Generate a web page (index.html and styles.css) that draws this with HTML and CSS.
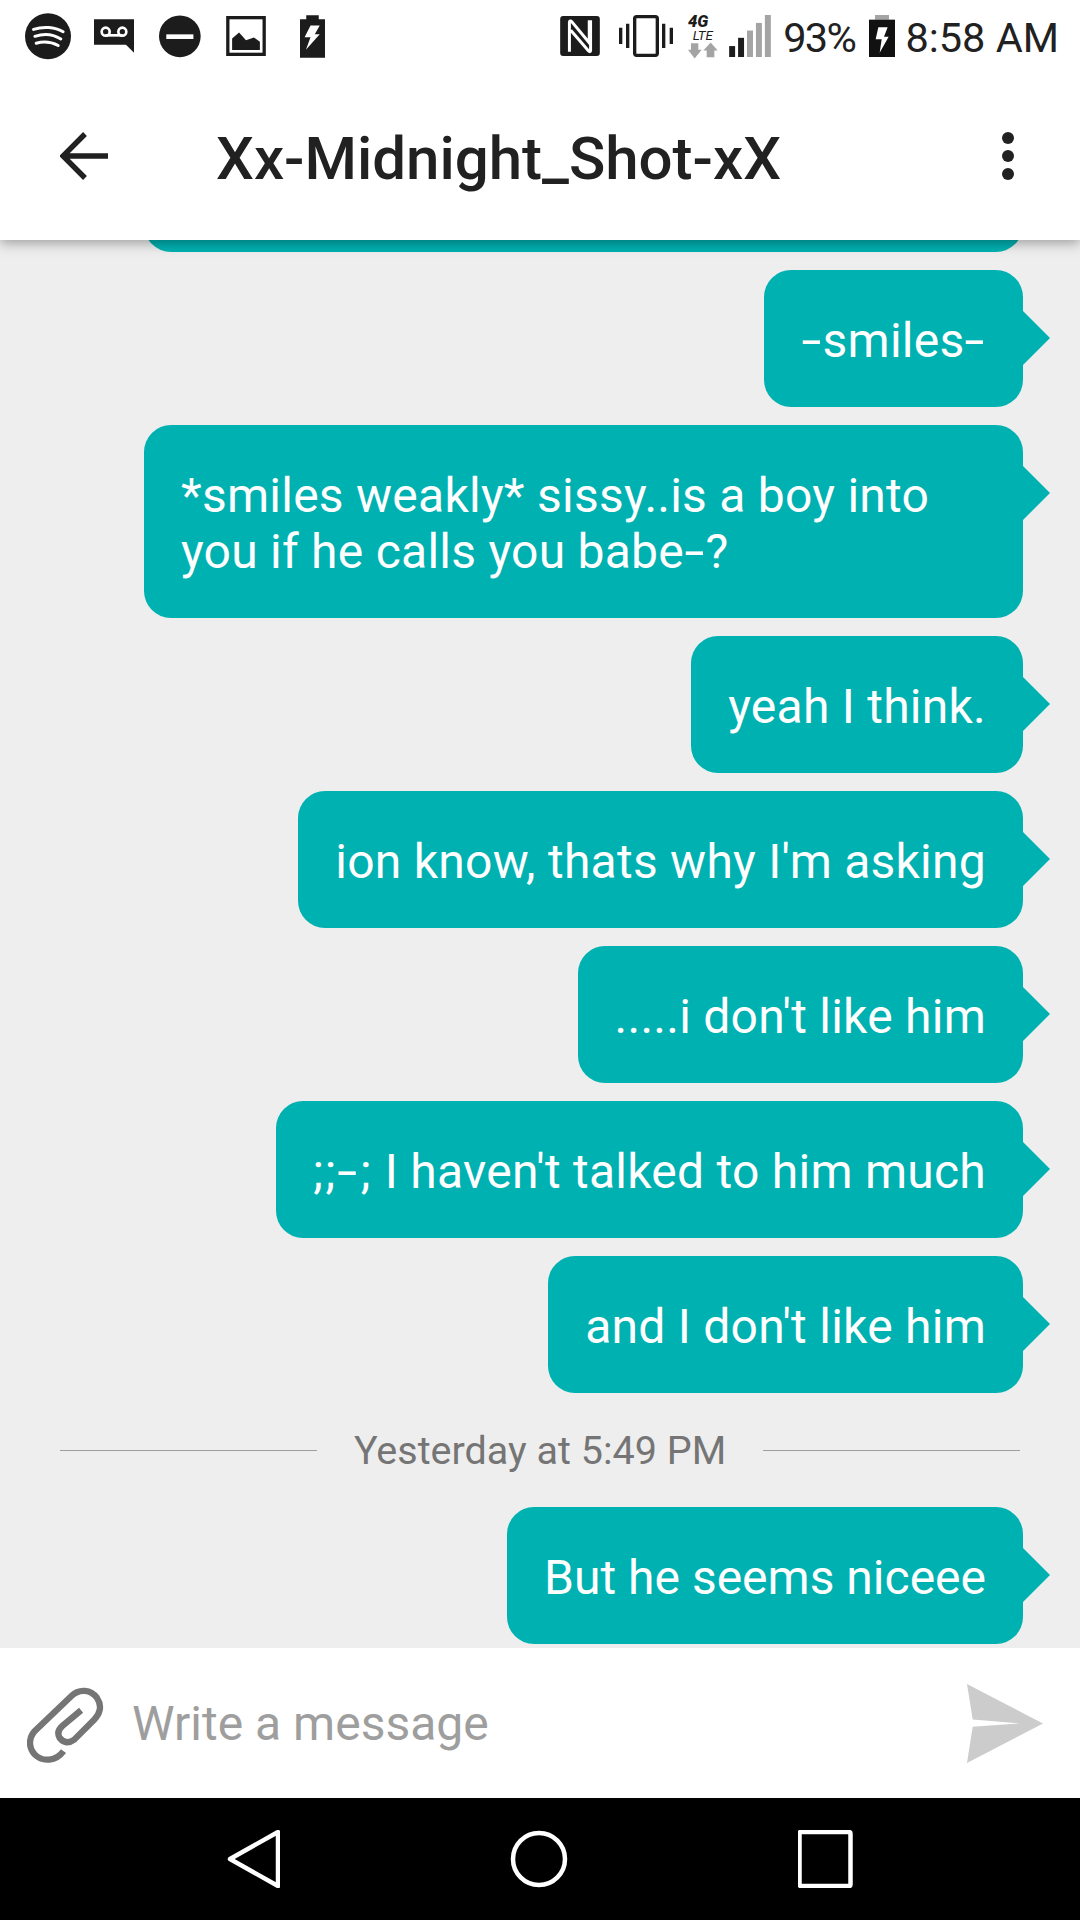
FILE: index.html
```html
<!DOCTYPE html>
<html lang="en">
<head>
    <meta charset="UTF-8">
    <meta name="viewport" content="width=device-width, initial-scale=1.0">
    <title>Chat</title>
    <link rel="stylesheet" href="styles.css">
</head>
<body>
    <div class="app">
        <div class="top">
            <!-- Status bar -->
            <div class="status-bar">
                <div class="status-left">
                    <svg class="ic-spotify" width="46" height="47" viewBox="75 38 140 141">
                        <circle cx="145" cy="108" r="70" fill="#1c1c1c"/>
                        <path d="M101 87C130 77 165 79 191 94M105 108C132 99 160 101 184 116M109 129C130 123 154 124 176 136" fill="none" stroke="#fff" stroke-width="9" stroke-linecap="round"/>
                    </svg>
                    <svg class="ic-voicemail" width="40" height="34" viewBox="282 56 120 102">
                        <path d="M282 57H402V157L378 133H282Z" fill="#1c1c1c"/>
                        <circle cx="317" cy="94" r="12" fill="none" stroke="#fff" stroke-width="8"/>
                        <circle cx="367" cy="94" r="12" fill="none" stroke="#fff" stroke-width="8"/>
                        <path d="M317 105H367" stroke="#fff" stroke-width="8"/>
                    </svg>
                    <svg class="ic-dnd" width="42" height="43" viewBox="477 44 127 127">
                        <circle cx="540" cy="107" r="63" fill="#1c1c1c"/>
                        <rect x="499" y="101" width="82" height="14" fill="#fff"/>
                    </svg>
                    <svg class="ic-image" width="40" height="40" viewBox="678 47 120 121">
                        <rect x="683" y="52" width="110" height="111" fill="none" stroke="#1c1c1c" stroke-width="10"/>
                        <path d="M696 150V115L717 97L738 120L762 112L780 125V150Z" fill="#1c1c1c"/>
                    </svg>
                    <svg class="ic-battery" width="25" height="43" viewBox="900 45 76 129">
                        <path d="M919 45H957V57H976V174H900V57H919Z" fill="#1c1c1c"/>
                        <path d="M932 76H960L945 103H960L918 150L932 112H914Z" fill="#fff"/>
                    </svg>
                </div>
                <div class="status-right">
                    <svg class="ic-nfc" width="40" height="40" viewBox="60 47 120 121">
                        <rect x="60" y="47" width="120" height="121" rx="9" fill="#1c1c1c"/>
                        <path d="M88 155V66C88 62 92 60 95 64L148 128V60M152 60V152C152 155 149 156 146 153L92 90" fill="none" stroke="#fff" stroke-width="9"/>
                    </svg>
                    <svg class="ic-vibrate" width="54" height="42" viewBox="237 45 162 126">
                        <rect x="284" y="50" width="68" height="116" rx="6" fill="none" stroke="#1c1c1c" stroke-width="10"/>
                        <path d="M242 83V132M263 71V144M371 71V144M394 83V132" stroke="#1c1c1c" stroke-width="10"/>
                    </svg>
                    <svg class="ic-lte" width="30" height="46" viewBox="444 36 90 137">
                        <text x="444" y="79" class="lte-4g">4G</text>
                        <text x="458" y="116" class="lte-text">LTE</text>
                        <path d="M453 126H475V146H485L464 172L444 146H453Z" fill="#a4a4a4"/>
                        <path d="M512 124L533 148H523V168H500V148H490Z" fill="#a4a4a4"/>
                    </svg>
                    <svg class="ic-signal" width="42" height="42" viewBox="567 45 126 127">
                        <rect x="567" y="139" width="18" height="33" fill="#1c1c1c"/>
                        <rect x="594" y="114" width="18" height="58" fill="#1c1c1c"/>
                        <rect x="621" y="92" width="18" height="80" fill="#a4a4a4"/>
                        <rect x="648" y="69" width="18" height="103" fill="#a4a4a4"/>
                        <rect x="675" y="45" width="18" height="127" fill="#a4a4a4"/>
                    </svg>
                    <span class="status-text status-pct">93%</span>
                    <svg class="ic-charge" width="26" height="42" viewBox="330 45 78 126">
                        <rect x="348" y="45" width="42" height="14" fill="#a4a4a4"/>
                        <rect x="330" y="59" width="78" height="112" fill="#111"/>
                        <path d="M358 82H386L375 110H389L362 158L368 118H350Z" fill="#fff"/>
                    </svg>
                    <span class="status-text">8:58 AM</span>
                </div>
            </div>
            <!-- Toolbar -->
            <div class="toolbar">
                <svg class="back" width="48" height="48" viewBox="0 0 48 48">
                    <path d="M48 24H3M25 2L3 24L25 46" fill="none" stroke="#212121" stroke-width="5.4"/>
                </svg>
                <h1 class="title">Xx-Midnight_Shot-xX</h1>
                <div class="more">
                    <span class="dot"></span>
                    <span class="dot"></span>
                    <span class="dot"></span>
                </div>
            </div>
        </div>

        <!-- Messages -->
        <div class="messages">
            <div class="bubble bubble-full">&nbsp;</div>
            <div class="bubble"><span class="dash">-</span>smiles<span class="dash">-</span></div>
            <div class="bubble bubble-full">*smiles weakly* sissy..is a boy into<br>you if he calls you babe<span class="dash">-</span>?</div>
            <div class="bubble">yeah I think.</div>
            <div class="bubble">ion know, thats why I'm asking</div>
            <div class="bubble">.....i don't like him</div>
            <div class="bubble"><span class="emote">;;<span class="dash">-</span>;</span> I haven't talked to him much</div>
            <div class="bubble">and I don't like him</div>
            <div class="divider"><span>Yesterday at 5:49 PM</span></div>
            <div class="bubble bubble-tight">But he seems niceee</div>
        </div>

        <!-- Input -->
        <div class="composer">
            <svg class="clip" width="77" height="77" viewBox="82 82 232 232">
                <path d="M192 275C170 305 130 310 105 285C85 262 88 235 105 215L215 110C240 85 275 90 293 115C310 140 300 165 285 180L225 240C205 255 190 248 180 235C172 220 178 208 190 198L245 152" fill="none" stroke="#757575" stroke-width="19"/>
            </svg>
            <div class="placeholder">Write a message</div>
            <svg class="send" width="78" height="79" viewBox="1238 192 227 236">
                <path d="M1238 192L1465 310L1238 428L1255 320L1395 310L1255 298Z" fill="#cccccc"/>
            </svg>
        </div>

        <!-- Nav bar -->
        <div class="nav">
            <svg width="58" height="58" viewBox="0 0 58 58">
                <path d="M8 29L56 2V56Z" fill="none" stroke="#fff" stroke-width="4.5" stroke-linejoin="round"/>
            </svg>
            <svg width="58" height="58" viewBox="0 0 58 58">
                <circle cx="29" cy="29" r="26" fill="none" stroke="#fff" stroke-width="4.5"/>
            </svg>
            <svg width="58" height="58" viewBox="0 0 58 58">
                <rect x="1.5" y="2" width="51" height="54" rx="1.5" fill="none" stroke="#fff" stroke-width="4.5"/>
            </svg>
        </div>
    </div>
</body>
</html>
```

FILE: styles.css
```css
body {
    font-family: Roboto, sans-serif;
    margin: 0;
    padding: 0;
    background: #eeeeee;
}

.app {
    width: 1080px;
    height: 1920px;
    display: flex;
    flex-direction: column;
    overflow: hidden;
}

.top {
    height: 240px;
    flex-shrink: 0;
    background: white;
    box-shadow: 0 3px 12px rgba(0,0,0,0.35);
    position: relative;
    z-index: 2;
}

.status-bar {
    height: 72px;
    display: flex;
    justify-content: space-between;
    align-items: center;
    padding: 0 21px 0 25px;
}

.status-left,
.status-right {
    display: flex;
    align-items: center;
}

.status-left {
    gap: 25px;
}

.ic-spotify {
    margin-right: -2px;
}

.ic-image {
    margin-right: 9px;
}

.status-right {
    gap: 12px;
}

.ic-nfc {
    margin-right: 7px;
}

.ic-vibrate {
    margin-right: 3px;
}

.ic-lte {
    margin-right: -1px;
}

.status-text {
    font-size: 41.5px;
    color: #212121;
    padding-top: 3px;
}

.status-pct {
    letter-spacing: -1.6px;
    margin-right: 2px;
}

.ic-charge {
    margin-right: -2px;
}

.lte-4g {
    font-family: Roboto, sans-serif;
    font-size: 50px;
    font-weight: 900;
    font-style: italic;
    fill: #1c1c1c;
}

.lte-text {
    font-family: Roboto, sans-serif;
    font-size: 40px;
    font-style: italic;
    fill: #1c1c1c;
}

.toolbar {
    height: 168px;
    display: flex;
    align-items: center;
    padding-left: 60px;
    box-sizing: border-box;
}

.title {
    margin: 0 0 0 108px;
    padding-top: 4px;
    flex: 1;
    font-size: 60px;
    font-weight: 500;
    color: #212121;
}

.more {
    display: flex;
    flex-direction: column;
    gap: 6px;
    margin-right: 66px;
}

.dot {
    width: 12px;
    height: 12px;
    border-radius: 50%;
    background: #212121;
}

.messages {
    flex: 1;
    min-height: 0;
    display: flex;
    flex-direction: column;
    justify-content: flex-end;
    gap: 18px;
    padding-bottom: 4px;
    overflow: hidden;
}

.bubble {
    flex-shrink: 0;
    align-self: flex-end;
    box-sizing: border-box;
    max-width: 879px;
    margin-right: 57px;
    padding: 43px 37px 38px;
    border-radius: 27px;
    background: #00b1b1;
    color: white;
    font-size: 48px;
    line-height: 56px;
    letter-spacing: 0.25px;
    position: relative;
}

.bubble::after {
    content: "";
    position: absolute;
    right: -27px;
    top: 41px;
    border-left: 27px solid #00b1b1;
    border-top: 27px solid transparent;
    border-bottom: 27px solid transparent;
}

.bubble-full {
    width: 879px;
}

.bubble-tight {
    letter-spacing: 0;
}

/* hyphens are longer in the app's font */
.dash {
    display: inline-block;
    margin: 0 4px;
    transform: scaleX(1.5);
}

.emote {
    letter-spacing: 2px;
}

.divider {
    flex-shrink: 0;
    height: 78px;
    display: flex;
    align-items: center;
    gap: 37px;
    padding: 0 60px;
    color: #757575;
    font-size: 39.5px;
}

.divider::before,
.divider::after {
    content: "";
    flex: 1;
    height: 1px;
    background: #9e9e9e;
}

.composer {
    height: 150px;
    flex-shrink: 0;
    background: white;
    display: flex;
    align-items: center;
    padding: 0 36px 0 27px;
}

.clip {
    margin-top: 5px;
}

.placeholder {
    flex: 1;
    margin-left: 28px;
    font-size: 48px;
    color: #9e9e9e;
}

.nav {
    height: 122px;
    flex-shrink: 0;
    background: black;
    display: flex;
    align-items: center;
    gap: 230px;
    padding-left: 222px;
}
```
